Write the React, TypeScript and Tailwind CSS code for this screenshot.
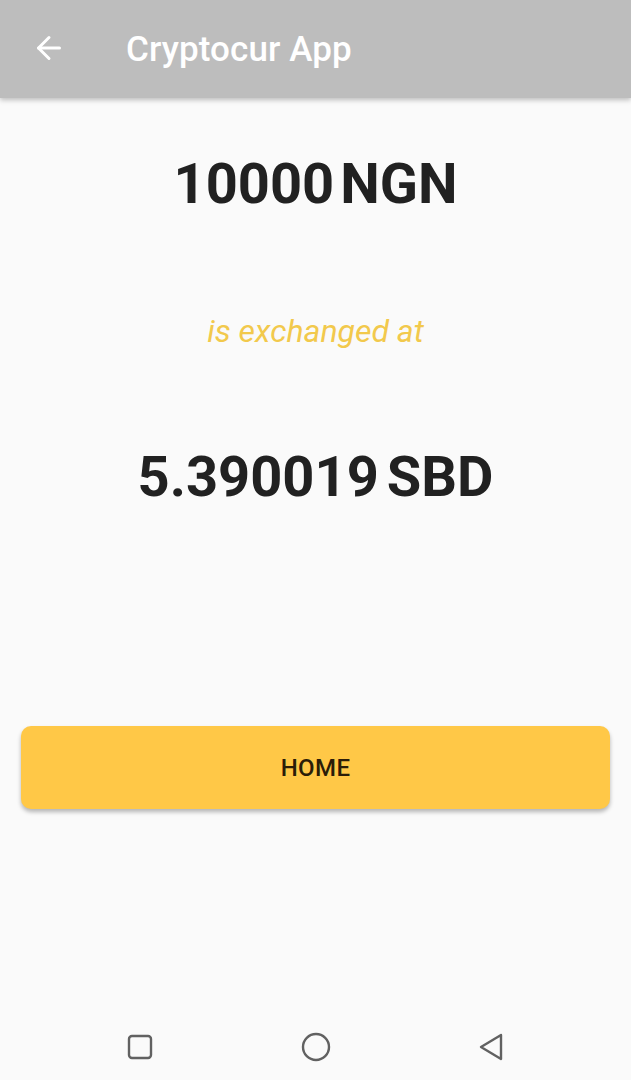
import React from 'react';
import { ArrowLeft } from 'lucide-react';

const App: React.FC = () => {
  return (
    <div className="w-[631px] h-[1080px] bg-[#fafafa] flex flex-col font-['Roboto',sans-serif]">
      {/* App bar */}
      <header className="h-[98px] bg-[#bdbdbd] flex items-center shadow-[0_2px_5px_rgba(0,0,0,0.25)] shrink-0">
        <ArrowLeft size={36} strokeWidth={2} className="text-white ml-[31px] mt-[-2px]" />
        <h1 className="ml-[59px] text-white text-[35px] font-medium tracking-[0.1px] mt-[2px]">Cryptocur App</h1>
      </header>

      {/* Content */}
      <main className="flex-1 flex flex-col items-center">
        <div className="mt-[52px] flex gap-[6px] text-[56px] font-bold text-[#212121] leading-[68px]">
          <span>10000</span>
          <span>NGN</span>
        </div>
        <p className="mt-[94px] text-[32px] italic text-[#f2c94c] leading-[38px]">is exchanged at</p>
        <div className="mt-[93px] flex gap-[8px] text-[56px] font-bold text-[#212121] leading-[68px]">
          <span>5.390019</span>
          <span>SBD</span>
        </div>

        <button className="mt-[215px] w-[589px] h-[83px] rounded-[10px] bg-[#ffc847] shadow-[0_3px_4px_rgba(0,0,0,0.28)] text-[#2b1d08] text-[24px] font-medium tracking-[0.4px]">
          HOME
        </button>
      </main>

      {/* Navigation bar */}
      <nav className="h-[66px] flex items-center justify-between px-[126px] shrink-0">
        <svg width="28" height="28" viewBox="0 0 28 28">
          <rect x="3" y="3" width="22" height="22" rx="3" fill="none" stroke="#616161" strokeWidth="2.4" />
        </svg>
        <svg width="30" height="30" viewBox="0 0 30 30">
          <circle cx="15" cy="15" r="13" fill="none" stroke="#616161" strokeWidth="2.4" />
        </svg>
        <svg width="28" height="30" viewBox="0 0 28 30">
          <path d="M24 3 L4 15 L24 27 Z" fill="none" stroke="#616161" strokeWidth="2.4" strokeLinejoin="round" />
        </svg>
      </nav>
    </div>
  );
};

export default App;
